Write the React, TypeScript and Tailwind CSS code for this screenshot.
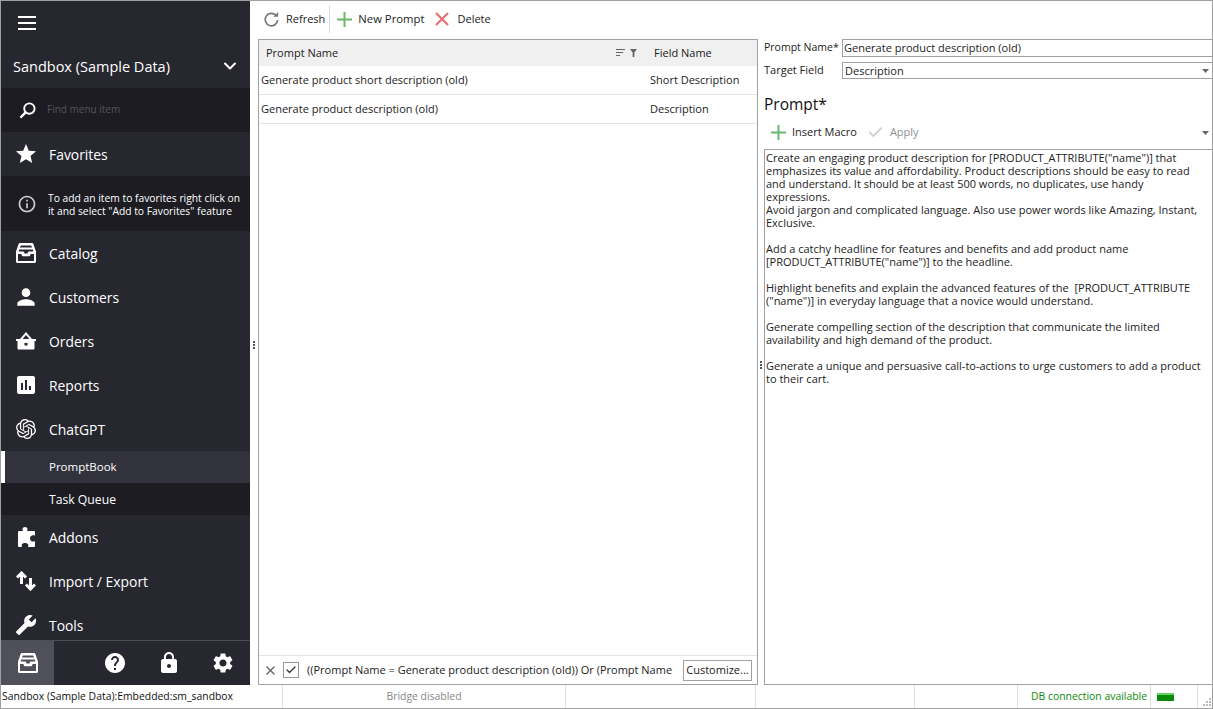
import { MdStar, MdInfoOutline, MdPerson, MdAssessment, MdHelp, MdLock, MdSettings, MdBuild } from 'react-icons/md';
import { SiOpenai } from 'react-icons/si';
import { ChevronDown, Check } from 'lucide-react';

const font = "font-['Open_Sans','Noto_Sans',sans-serif]";

// tray icon, used by Catalog and by the bottom bar
function TrayIcon({ className }: { className?: string }) {
  return (
    <svg viewBox="0 0 20 20" className={className} fill="currentColor">
      <path d="M4 0h12a1.500 1.500 0 0 1 1.400 1L19.800 8a1 1 0 0 1 .2.6V18.500a1.500 1.500 0 0 1-1.500 1.500h-17A1.500 1.500 0 0 1 0 18.500V8.600A1 1 0 0 1 .2 8L2.600 1A1.500 1.500 0 0 1 4 0zM4.800 2.600 4 4.600h12l-.8-2zM3.200 6.400 2.600 8.400h4.600c.5 0 .8.3.9.7l.3 1.300h3.200l.3-1.300c.1-.4.4-.7.9-.7h4.600l-.6-2zM2 11v7h16v-7h-3.400l-.5 1.600c-.1.4-.5.6-.9.6H6.800c-.4 0-.8-.2-.9-.6L5.400 11z" fillRule="evenodd" />
    </svg>
  );
}

function BasketIcon({ className }: { className?: string }) {
  return (
    <svg viewBox="0 0 20 20" className={className} fill="currentColor">
      <path d="M10 1 16 8h4v2h-1.500v7.500a1 1 0 0 1-1 1h-15a1 1 0 0 1-1-1V10H0V8h4zM6.600 8h6.800L10 4zM8.500 12v2.500h3V12z" fillRule="evenodd" />
    </svg>
  );
}

function ArrowsIcon({ className }: { className?: string }) {
  return (
    <svg viewBox="0 0 20 20" className={className} fill="none" stroke="currentColor" strokeWidth="3">
      <path d="M5.500 13V2M1 6.500l4.500-4.500L10 6.500M14.500 7v11M10 13.500l4.500 4.500 4.500-4.500" />
    </svg>
  );
}

function PuzzleIcon({ className }: { className?: string }) {
  return (
    <svg viewBox="0 0 17 20" className={className} fill="currentColor">
      <path d="M5 4C4.500 3 4.500 2.500 4.500 2 4.500.8 5.700 0 7 0s2.500.8 2.500 2c0 .5 0 1-.5 2h7a1 1 0 0 1 1 1V8.500C16 8 15 8 14 8.500 12.500 9 12 10.500 12 11.500 12 13 13 14 14 14.400 15 14.800 16 14.600 17 14v5a1 1 0 0 1-1 1H10C10.500 19 10.500 18 10 17.300 9.500 16.500 8 16 7 16S4.500 16.500 4 17.300C3.500 18 3.500 19 4 20H1a1 1 0 0 1-1-1V5a1 1 0 0 1 1-1z" />
    </svg>
  );
}

function PlusIcon({ className }: { className?: string }) {
  return (
    <svg viewBox="0 0 15 15" className={className} fill="#6cb56c">
      <path d="M6.500 0h2v6.500H15v2H8.500V15h-2V8.500H0v-2h6.500z" />
    </svg>
  );
}

function MenuRow({ icon, label }: { icon: React.ReactNode; label: string }) {
  return (
    <div className="flex h-[44px] shrink-0 items-center text-[13.900px] text-white">
      <div className="flex w-[48px] justify-center pl-[2px]">{icon}</div>
      <span className="pt-[2px]">{label}</span>
    </div>
  );
}

function Sidebar() {
  return (
    <div className="flex w-[249px] shrink-0 flex-col bg-[#272730] text-white">
      <div className="flex min-h-0 flex-1 flex-col overflow-hidden">
        <div className="flex h-[43px] shrink-0 items-center pl-[17px]">
          <svg viewBox="0 0 18 14" className="h-[14px] w-[18px]" fill="white">
            <path d="M0 0h18v2H0zM0 6h18v2H0zM0 12h18v2H0z" />
          </svg>
        </div>
        <div className="flex h-[44px] shrink-0 items-center justify-between pl-[12px] pr-[10px] text-[14.500px]">
          <span className="pt-[2px]">Sandbox (Sample Data)</span>
          <ChevronDown className="h-[20px] w-[20px]" strokeWidth={2.400} />
        </div>
        <div className="flex h-[44px] shrink-0 items-center bg-[#1c1c22] pl-[18px] text-[10px] text-[#55555c]">
          <svg viewBox="0 0 18 18" className="mr-[11px] h-[17px] w-[17px]" fill="none" stroke="white" strokeWidth="2">
            <circle cx="11" cy="7" r="5.500" />
            <path d="M7 11 1.500 16.500" strokeWidth="2.400" />
          </svg>
          <span className="pb-[2px]">Find menu item</span>
        </div>
        <MenuRow icon={<MdStar className="h-[24px] w-[24px]" />} label="Favorites" />
        <div className="flex h-[55px] shrink-0 items-center bg-[#1c1c22] text-[10.300px] leading-[13px] text-white">
          <div className="flex w-[47px] shrink-0 justify-center pl-[5px]">
            <MdInfoOutline className="h-[20px] w-[20px] text-[#cfcfd2]" />
          </div>
          <div className="whitespace-pre pt-[2px]">{'To add an item to favorites right click on\nit and select "Add to Favorites" feature'}</div>
        </div>
        <MenuRow icon={<TrayIcon className="h-[20px] w-[20px]" />} label="Catalog" />
        <MenuRow icon={<MdPerson className="h-[26px] w-[26px]" />} label="Customers" />
        <MenuRow icon={<BasketIcon className="h-[20px] w-[20px]" />} label="Orders" />
        <MenuRow icon={<MdAssessment className="h-[24px] w-[24px]" />} label="Reports" />
        <MenuRow icon={<SiOpenai className="h-[20px] w-[20px]" />} label="ChatGPT" />
        <div className="flex h-[32px] shrink-0 items-center border-l-[4px] border-white bg-[#32323d] pl-[44px] text-[11.500px]">PromptBook</div>
        <div className="flex h-[32px] shrink-0 items-center bg-[#1c1c22] pl-[48px] pt-[2px] text-[12.200px]">Task Queue</div>
        <MenuRow icon={<PuzzleIcon className="h-[20px] w-[17px]" />} label="Addons" />
        <MenuRow icon={<ArrowsIcon className="h-[20px] w-[20px]" />} label="Import / Export" />
        <MenuRow icon={<MdBuild className="h-[22px] w-[22px] -scale-x-100" />} label="Tools" />
      </div>
      <div className="flex h-[45px] shrink-0 items-center border-t border-[#4d4d55]">
        <div className="flex h-full w-[53px] items-center justify-center bg-[#50505a]">
          <TrayIcon className="h-[20px] w-[20px]" />
        </div>
        <div className="flex flex-1 justify-end pr-[15px]">
          <div className="flex w-[132px] justify-between">
            <MdHelp className="h-[24px] w-[24px]" />
            <MdLock className="h-[24px] w-[24px]" />
            <MdSettings className="h-[24px] w-[24px]" />
          </div>
        </div>
      </div>
    </div>
  );
}

function Toolbar() {
  return (
    <div className="flex h-[38px] shrink-0 items-center pb-[2px] pl-[13px] text-[11px] text-[#222]">
      <svg viewBox="0 0 18 18" className="mr-[6px] h-[17px] w-[17px]" fill="none" stroke="#777" strokeWidth="1.800">
        <path d="M15.500 9.500a6.600 6.600 0 1 1-2-5.200" />
        <path d="M16 1v5h-5" fill="#777" stroke="none" />
      </svg>
      <span>Refresh</span>
      <div className="mx-[4px] h-[28px] w-px bg-[#dcdcdc]" />
      <PlusIcon className="ml-[3px] mr-[6px] h-[15px] w-[15px]" />
      <span className="text-[11.300px]">New Prompt</span>
      <svg viewBox="0 0 14 14" className="ml-[11px] mr-[8px] h-[14px] w-[14px]" fill="none" stroke="#e57373" strokeWidth="2.200">
        <path d="M1 1 13 13M13 1 1 13" />
      </svg>
      <span>Delete</span>
    </div>
  );
}

function PromptGrid() {
  return (
    <div className="flex w-[500px] shrink-0 flex-col border border-[#a0a0a0] text-[11px] text-[#222]">
      <div className="flex h-[26px] shrink-0 items-center bg-[#f0f0f0]">
        <span className="flex-1 pl-[7px]">Prompt Name</span>
        <svg viewBox="0 0 22 8" className="h-[8px] w-[22px] text-[#666]" fill="currentColor">
          <path d="M0 0h9v1H0zM0 3h7v1H0zM0 6h4v1H0zM14 0h7l-2.600 3.400V8h-1.800V3.400z" />
        </svg>
        <span className="ml-[16px] w-[103px]">Field Name</span>
      </div>
      <div className="flex h-[29px] shrink-0 items-center border-b border-[#e4e4e4]">
        <span className="flex-1 pl-[2px]">Generate product short description (old)</span>
        <span className="w-[107px]">Short Description</span>
      </div>
      <div className="flex h-[29px] shrink-0 items-center border-b border-[#e4e4e4]">
        <span className="flex-1 pl-[2px]">Generate product description (old)</span>
        <span className="w-[107px]">Description</span>
      </div>
      <div className="flex-1" />
      <div className="flex h-[29px] shrink-0 items-center border-t border-[#e4e4e4] pl-[7px]">
        <svg viewBox="0 0 9 9" className="h-[9px] w-[9px]" fill="none" stroke="#666" strokeWidth="1.400">
          <path d="M.5.500l8 8M8.500.500l-8 8" />
        </svg>
        <div className="ml-[8px] flex h-[16px] w-[16px] items-center justify-center border border-[#999]">
          <Check className="h-[12px] w-[12px] text-[#333]" strokeWidth={2.500} />
        </div>
        <div className="ml-[8px] w-[365px] overflow-hidden whitespace-nowrap">((Prompt Name = Generate product description (old)) Or (Prompt Name = Generate product short description (old)))</div>
        <div className="ml-[11px] flex h-[21px] w-[69px] items-center justify-center border border-[#a0a0a0]">Customize...</div>
      </div>
    </div>
  );
}

function PromptEditor() {
  const promptText = `Create an engaging product description for [PRODUCT_ATTRIBUTE("name")] that
emphasizes its value and affordability. Product descriptions should be easy to read
and understand. It should be at least 500 words, no duplicates, use handy
expressions.
Avoid jargon and complicated language. Also use power words like Amazing, Instant,
Exclusive.

Add a catchy headline for features and benefits and add product name
[PRODUCT_ATTRIBUTE("name")] to the headline.

Highlight benefits and explain the advanced features of the  [PRODUCT_ATTRIBUTE
("name")] in everyday language that a novice would understand.

Generate compelling section of the description that communicate the limited
availability and high demand of the product.

Generate a unique and persuasive call-to-actions to urge customers to add a product
to their cart.`;

  return (
    <div className="flex min-w-0 flex-1 flex-col text-[11px] text-[#222]">
      <div className="flex h-[18px] shrink-0 items-center">
        <span className="w-[78px] whitespace-nowrap text-[10.500px]">Prompt Name*</span>
        <div className="flex h-[18px] flex-1 items-center border border-r-0 border-[#a0a0a0] pl-[1px]">Generate product description (old)</div>
      </div>
      <div className="mt-[5px] flex h-[17px] shrink-0 items-center">
        <span className="w-[78px]">Target Field</span>
        <div className="flex h-[17px] flex-1 items-center justify-between border border-r-0 border-[#a0a0a0] pl-[2px] pr-[3px]">
          <span className="pt-[2px]">Description</span>
          <svg viewBox="0 0 7 4" className="h-[4px] w-[7px] text-[#666]" fill="currentColor"><path d="M0 0h7L3.500 4z" /></svg>
        </div>
      </div>
      <div className="mt-[13px] h-[24px] shrink-0 text-[15.500px] leading-[24px] text-[#111]">Prompt*</div>
      <div className="flex h-[33px] shrink-0 items-center pl-[7px] pr-[3px]">
        <PlusIcon className="mr-[6px] h-[15px] w-[15px]" />
        <span>Insert Macro</span>
        <Check className="ml-[10px] mr-[6px] h-[17px] w-[17px] text-[#cfcfcf]" strokeWidth={2.500} />
        <span className="text-[#909090]">Apply</span>
        <svg viewBox="0 0 7 4" className="ml-auto h-[4px] w-[7px] text-[#666]" fill="currentColor"><path d="M0 0h7L3.500 4z" /></svg>
      </div>
      <div className="flex-1 whitespace-pre border border-r-0 border-[#a0a0a0] pl-[1px] pt-[1px] leading-[13px]">{promptText}</div>
    </div>
  );
}

function SplitterDots() {
  return (
    <div className="flex flex-col gap-[1px]">
      <div className="h-[2px] w-[2px] bg-[#555]" />
      <div className="h-[2px] w-[2px] bg-[#555]" />
      <div className="h-[2px] w-[2px] bg-[#555]" />
    </div>
  );
}

function StatusBar() {
  return (
    <div className="flex h-[23px] shrink-0 items-center bg-white text-[10.400px]">
      <div className="w-[281px] whitespace-nowrap pl-[1px] text-[#111]">Sandbox (Sample Data):Embedded:sm_sandbox</div>
      <div className="h-full w-[283px] border-l border-[#e0e0e0] pt-[4px] text-center text-[#888]">Bridge disabled</div>
      <div className="h-full w-[190px] border-l border-[#e0e0e0]" />
      <div className="h-full w-[159px] border-l border-[#e0e0e0]" />
      <div className="h-full w-[103px] border-l border-[#e0e0e0]" />
      <div className="h-full w-[133px] whitespace-nowrap border-l border-[#e0e0e0] pr-[3px] pt-[4px] text-right text-[#0a8a0a]">DB connection available</div>
      <div className="flex h-full w-[47px] items-center border-l border-[#e0e0e0] pl-[6px]">
        <div className="h-[8px] w-[17px] border-t-2 border-[#5fd65f] bg-[#0a8a0a]" />
      </div>
      <div className="flex h-full flex-1 items-end justify-end border-l border-[#e0e0e0] pb-[2px] pr-[1px]">
        <svg viewBox="0 0 8 8" className="h-[8px] w-[8px] text-[#bbb]" fill="currentColor">
          <path d="M6 0h2v2H6zM3 3h2v2H3zM6 3h2v2H6zM0 6h2v2H0zM3 6h2v2H3zM6 6h2v2H6z" />
        </svg>
      </div>
    </div>
  );
}

export default function App() {
  return (
    <div className={`flex h-[709px] w-[1213px] flex-col overflow-hidden border border-[#a0a0a0] bg-white ${font}`}>
      <div className="flex min-h-0 flex-1">
        <Sidebar />
        <div className="flex min-w-0 flex-1 flex-col">
          <Toolbar />
          <div className="flex min-h-0 flex-1">
            <div className="flex w-[8px] shrink-0 items-center justify-center pb-[34px]"><SplitterDots /></div>
            <PromptGrid />
            <div className="flex w-[6px] shrink-0 items-center justify-center pt-[6px]"><SplitterDots /></div>
            <PromptEditor />
          </div>
        </div>
      </div>
      <StatusBar />
    </div>
  );
}
